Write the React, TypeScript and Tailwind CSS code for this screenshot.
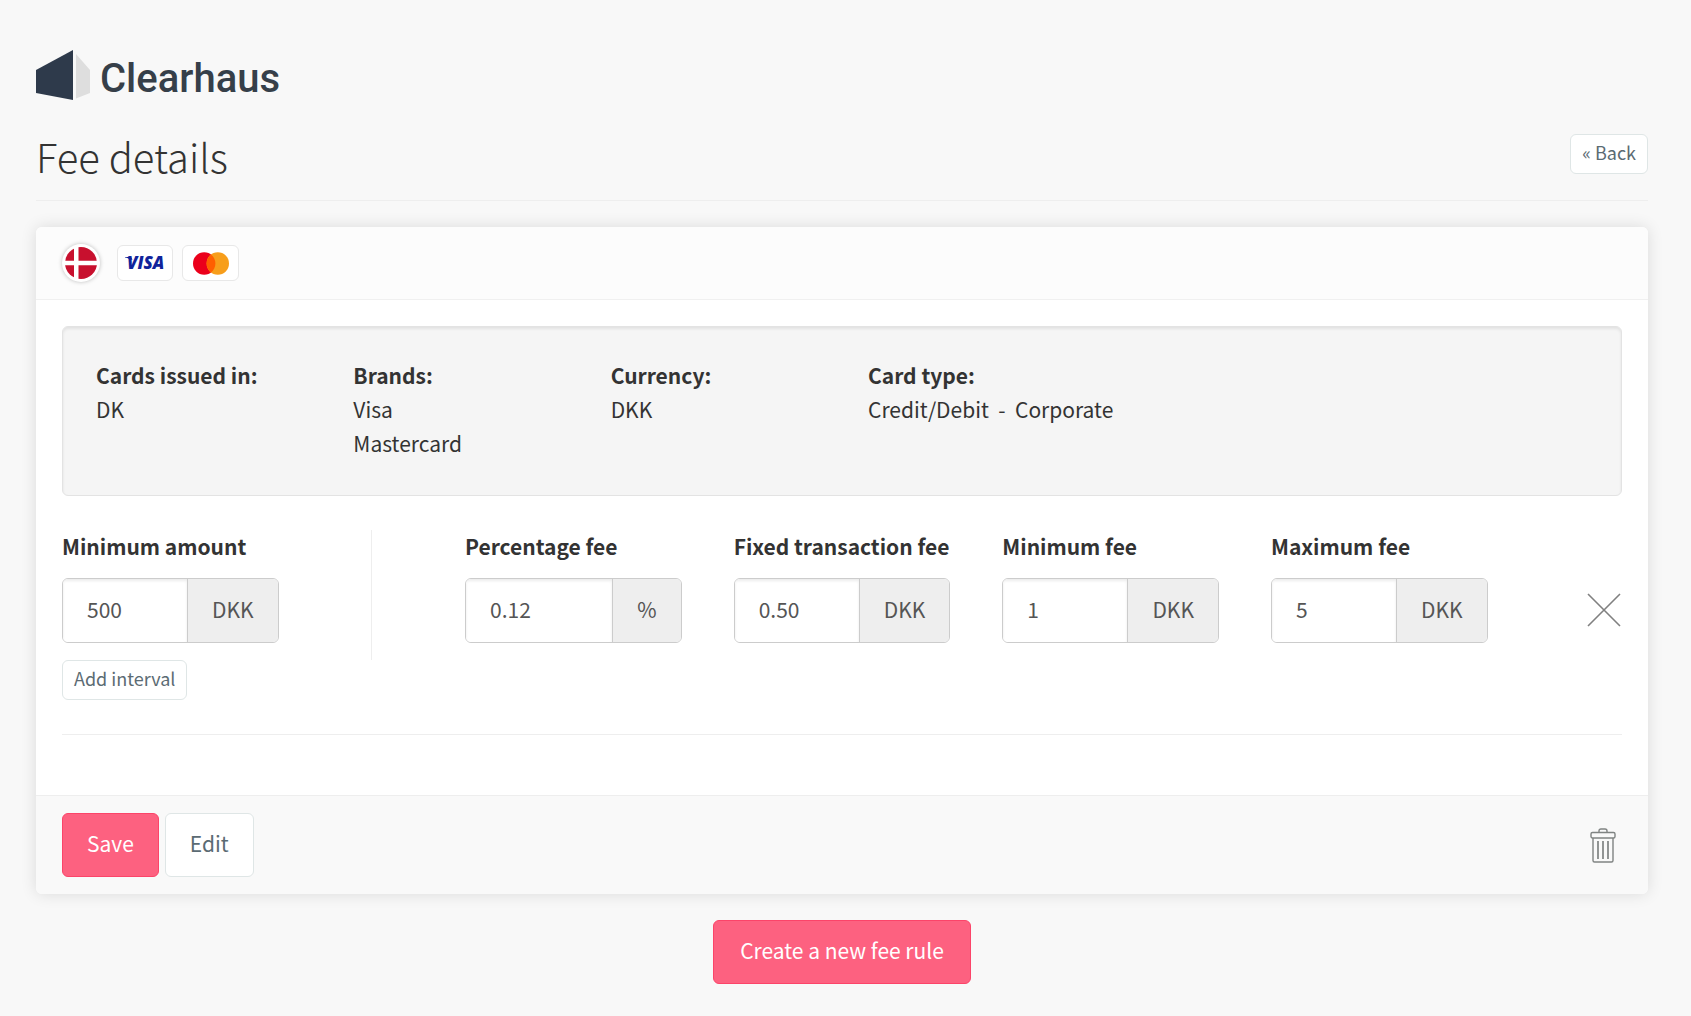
import React, { useState } from "react";

const smallButton =
  "h-10 rounded-md border border-[#dfe6e6] bg-white px-[11px] pb-1 text-lg leading-6 text-[#5b6b73]";
const primaryButton =
  "h-16 rounded-md border border-[#fc4469] bg-[#fd6180] pb-1 leading-8 text-white";

function Logo() {
  return (
    <a href="#" className="flex items-center gap-[10px]">
      <svg width="54" height="50" viewBox="0 0 54 50" aria-hidden="true">
        <path d="M0 20 37 0v50L0 43z" fill="#2e3a4b" />
        <path d="M40 4 54 20v23L40 48.500z" fill="#dedede" />
      </svg>
      <span className="pt-2 font-['Roboto'] text-[40px] font-medium leading-[42px] text-[#363f49]">
        Clearhaus
      </span>
    </a>
  );
}

function DanishFlag() {
  return (
    <svg
      className="rounded-full bg-white shadow-[0_0_4px_rgba(0,0,0,0.25)]"
      width="38"
      height="38"
      viewBox="0 0 38 38"
      role="img"
      aria-label="Denmark"
    >
      <circle cx="19" cy="19" r="16" fill="#c8102e" />
      <path d="M12 2h4.500v34H12zM2 16.700h34v4.600H2z" fill="#fff" />
    </svg>
  );
}

function Visa() {
  return (
    <svg width="52" height="32" viewBox="0 0 52 32" role="img" aria-label="Visa">
      <path d="M6 10h6l1.500 2.500L11 13C10 11.500 8 10.700 6 10.400z" fill="#10239b" />
      <text
        x="8"
        y="22"
        fill="#10239b"
        fontFamily="Open Sans"
        fontSize="17"
        fontWeight="800"
        fontStyle="italic"
      >
        VISA
      </text>
    </svg>
  );
}

function Mastercard() {
  return (
    <svg width="36" height="23" viewBox="0 0 36 23" role="img" aria-label="Mastercard">
      <circle cx="11.200" cy="11.500" r="11.200" fill="#eb001b" />
      <circle cx="24.800" cy="11.500" r="11.200" fill="#f79e1b" />
      <path d="M18 2.600a11.200 11.200 0 0 1 0 17.800a11.200 11.200 0 0 1 0-17.800" fill="#ff5f00" />
    </svg>
  );
}

function Cross() {
  return (
    <svg width="34" height="34" viewBox="0 0 34 34" fill="none" stroke="#808080" strokeWidth="1.600">
      <path d="M1 1l32 32M33 1 1 33" />
    </svg>
  );
}

function Trash() {
  return (
    <svg width="26" height="35" viewBox="0 0 26 35" fill="none" stroke="#808483" strokeWidth="1.400">
      <path d="M9 4V3q0-2 2-2h4q2 0 2 2v1" />
      <rect x="1" y="4.500" width="24" height="5.500" rx="1.500" />
      <path d="M3 10v22.500q0 1.500 1.500 1.500h17q1.500 0 1.500-1.500V10" />
      <path d="M8 13v18M13 13v18M18 13v18" strokeWidth="1.700" />
    </svg>
  );
}

function Detail(props: { label: string; wide?: boolean; children: React.ReactNode }) {
  return (
    <div className={props.wide ? "col-span-3 px-[26px]" : "px-[26px]"}>
      <dt className="font-bold">{props.label}</dt>
      <dd>{props.children}</dd>
    </div>
  );
}

function Field(props: { id: string; label: string; unit: string; initial: string }) {
  const [value, setValue] = useState(props.initial);

  return (
    <div className="col-span-2 px-[26px]">
      <label htmlFor={props.id} className="block whitespace-nowrap font-bold leading-8">
        {props.label}
      </label>
      <div className="mt-4 flex h-[65px] overflow-hidden rounded-md border border-[#cccccc] text-[#555555]">
        <input
          id={props.id}
          className="w-0 flex-1 bg-white px-6 pb-1 shadow-[inset_0_2px_3px_rgba(0,0,0,0.08)] outline-none"
          value={value}
          onChange={(e) => setValue(e.target.value)}
        />
        <span className="flex items-center border-l border-[#cccccc] bg-[#eeeeee] px-6 pb-1">
          {props.unit}
        </span>
      </div>
    </div>
  );
}

const fees = [
  { id: "percentage", label: "Percentage fee", unit: "%", initial: "0.12" },
  { id: "fixed", label: "Fixed transaction fee", unit: "DKK", initial: "0.50" },
  { id: "minimum", label: "Minimum fee", unit: "DKK", initial: "1" },
  { id: "maximum", label: "Maximum fee", unit: "DKK", initial: "5" },
];

export default function App() {
  return (
    <div className="min-h-screen bg-[#f8f8f8] pt-[50px] pr-[43px] pb-8 pl-9 font-['Noto_Sans_CJK_SC',sans-serif] text-[21px] leading-[34px] text-[#333333]">
      <Logo />

      <header className="mt-[34px] flex items-start justify-between border-b border-[#eeeeee] pb-[22px]">
        <h1 className="text-[40px] font-light leading-[44px]">Fee details</h1>
        <button className={smallButton}>« Back</button>
      </header>

      <main>
        <section className="mt-[26px] rounded-md bg-white shadow-[0_0_16px_rgba(0,0,0,0.12)]">
          <div className="flex h-[73px] items-center rounded-t-md border-b border-[#f0f0f0] bg-[#fcfcfc] px-[26px]">
            <DanishFlag />
            <span className="ml-[17px] flex h-9 w-14 items-center justify-center rounded-md border border-[#e8e8e8] bg-white">
              <Visa />
            </span>
            <span className="ml-[9px] flex h-9 w-[57px] items-center justify-center rounded-md border border-[#e8e8e8] bg-white">
              <Mastercard />
            </span>
          </div>

          <div className="px-[26px] pt-[26px]">
            <dl className="grid grid-cols-6 rounded-md border border-[#e3e3e3] bg-[#f5f5f5] px-[7px] pt-[31px] pb-[35px] shadow-[inset_0_2px_3px_rgba(0,0,0,0.08)]">
              <Detail label="Cards issued in:">DK</Detail>
              <Detail label="Brands:">
                Visa
                <br />
                Mastercard
              </Detail>
              <Detail label="Currency:">DKK</Detail>
              <Detail label="Card type:" wide>
                Credit/Debit &nbsp;-&nbsp; Corporate
              </Detail>
            </dl>
          </div>

          <form className="mt-[34px] grid grid-cols-12" onSubmit={(e) => e.preventDefault()}>
            <Field id="amount" label="Minimum amount" unit="DKK" initial="500" />
            <div className="flex h-[130px] justify-center">
              <div className="w-px bg-[#eeeeee]" />
            </div>
            {fees.map((fee) => (
              <Field key={fee.id} {...fee} />
            ))}
            <div className="flex items-start justify-end pt-[63px] pr-[27px]">
              <button type="button" aria-label="Remove interval">
                <Cross />
              </button>
            </div>
          </form>

          <div className="mx-[26px] flex border-b border-[#eeeeee] pb-[34px]">
            <button className={smallButton}>Add interval</button>
          </div>

          <footer className="mt-[60px] flex items-center gap-[6px] rounded-b-md border-t border-[#eeeeee] bg-[#f9f9f9] px-[26px] py-[17px]">
            <button className={`${primaryButton} px-6`}>Save</button>
            <button className="h-16 rounded-md border border-[#dfe6e6] bg-white px-6 pb-1 leading-8 text-[#5b6b73]">
              Edit
            </button>
            <button className="mr-[6px] ml-auto" aria-label="Delete fee rule">
              <Trash />
            </button>
          </footer>
        </section>

        <div className="mt-[26px] flex justify-center">
          <button className={`${primaryButton} px-[26px]`}>Create a new fee rule</button>
        </div>
      </main>
    </div>
  );
}
